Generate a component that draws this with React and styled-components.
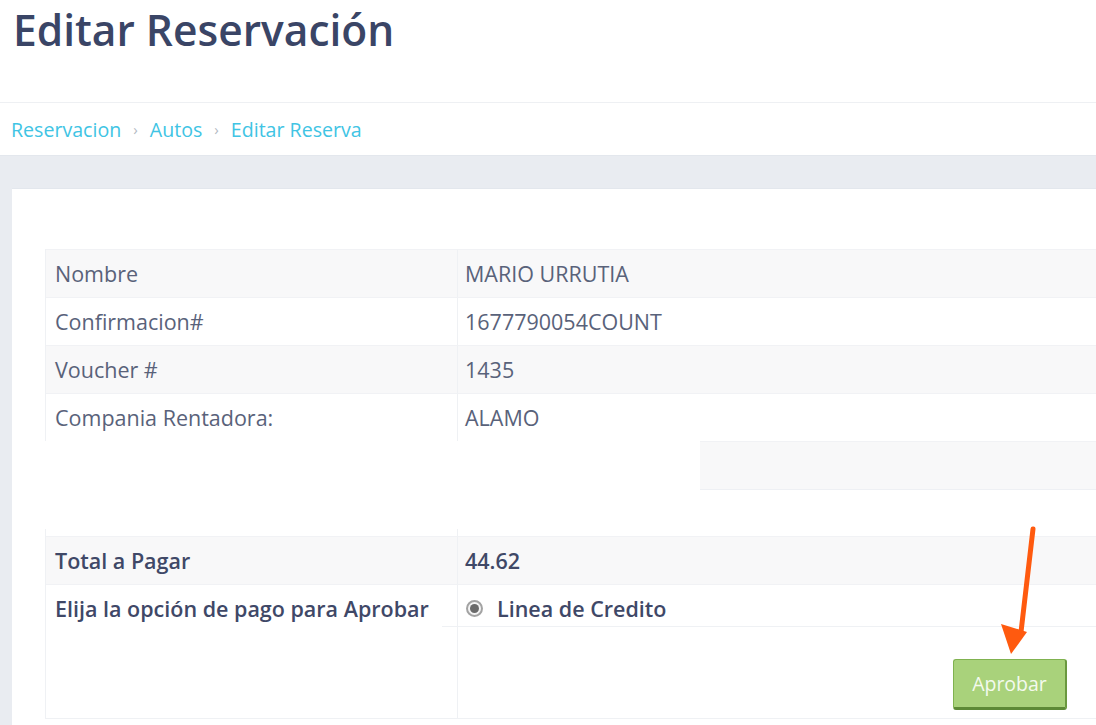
import React from "react";
import styled, { createGlobalStyle } from "styled-components";

const GlobalStyle = createGlobalStyle`
  html, body {
    margin: 0;
    padding: 0;
    background: #fff;
    font-family: "Open Sans", "Liberation Sans", sans-serif;
    overflow: hidden;
  }
`;

const Page = styled.div`
  width: 1096px;
  height: 725px;
  position: relative;
  overflow: hidden;
`;

const Header = styled.header`
  height: 103px;
  padding-left: 13px;
  border-bottom: 1px solid #eef0f3;
  box-sizing: border-box;
`;

const Title = styled.h1`
  margin: 0;
  padding-top: 1px;
  font-size: 42.5px;
  font-weight: 600;
  line-height: 58px;
  color: #3a4566;
`;

const Crumbs = styled.nav`
  height: 53px;
  display: flex;
  align-items: center;
  padding-left: 11px;
  gap: 11px;
  font-size: 19.6px;
  color: #40c4e4;
  border-bottom: 1px solid #e3e7ed;
  box-sizing: border-box;
`;

const Sep = styled.span`
  color: #b4bac4;
  font-size: 15px;
  padding: 0 1px;
`;

const Main = styled.main`
  background: #e9ecf1;
  padding: 32px 0 0 12px;
`;

const Panel = styled.section`
  background: #fff;
  padding: 60px 0 8px 33px;
  min-height: 560px;
  border-top: 1px solid #e3e7ed;
`;

const Table = styled.div`
  display: grid;
  grid-template-columns: 411px 1fr;
  border-left: 1px solid #eff1f4;
  ${(p) => (p.$bottom ? "border-bottom: 1px solid #eff1f4;" : "")}
`;

const Cell = styled.div`
  height: 48px;
  box-sizing: border-box;
  display: flex;
  align-items: center;
  padding-left: ${(p) => (p.$first ? 9 : 7)}px;
  font-size: 21.5px;
  font-weight: ${(p) => (p.$bold ? 600 : 400)};
  color: ${(p) => (p.$bold ? "#3f4867" : "#59627a")};
  background: ${(p) => (p.$striped ? "#f8f8f9" : "#fff")};
  border-top: 1px solid #f1f2f5;
  ${(p) => (p.$first ? "" : "border-left: 1px solid #eff1f4;")}
`;

const GapCell = styled.div`
  height: 7px;
  ${(p) => (p.$first ? "" : "border-left: 1px solid #eff1f4;")}
`;

const Filler = styled.div`
  height: 47px;
  margin-left: 655px;
  margin-bottom: 39px;
  background: #f8f8f9;
  border-top: 1px solid #f1f2f5;
  border-bottom: 1px solid #eef0f4;
`;

const TopCell = styled.div`
  padding: 9px 0 0 9px;
  font-size: 21.5px;
  font-weight: 600;
  color: #3f4867;
  border-top: 1px solid #f1f2f5;
  height: 134px;
  box-sizing: border-box;
`;

const OptionCell = styled.div`
  border-left: 1px solid #eff1f4;
  border-top: 1px solid #f1f2f5;
  display: flex;
  flex-direction: column;
`;

const Option = styled.label`
  height: 42px;
  margin-left: -16px;
  padding: 5px 0 0 24px;
  display: flex;
  align-items: center;
  gap: 14px;
  font-size: 21.5px;
  font-weight: 600;
  color: #3f4867;
  border-bottom: 1px solid #eff1f4;
  box-sizing: border-box;
`;

const Radio = styled.span`
  width: 17px;
  height: 17px;
  border-radius: 50%;
  box-sizing: border-box;
  border: 2.5px solid #a3a3a3;
  background: #f4f4f4;
  display: flex;
  align-items: center;
  justify-content: center;
  &::after {
    content: "";
    width: 9px;
    height: 9px;
    border-radius: 50%;
    background: #6a6a6a;
  }
`;

const Actions = styled.div`
  display: flex;
  justify-content: flex-end;
  padding: 32px 29px 0 0;
`;

const Button = styled.button`
  width: 114px;
  height: 51px;
  font-family: inherit;
  font-size: 19.5px;
  color: #f4faee;
  background: #a9d27b;
  border: 1px solid #80b250;
  border-bottom: 3px solid #5d8a36;
  border-right: 2px solid #6a983f;
  border-radius: 3px;
  padding: 0;
`;

const Arrow = styled.svg`
  position: absolute;
  left: 996px;
  top: 524px;
`;

const rows = [
  ["Nombre", "MARIO URRUTIA"],
  ["Confirmacion#", "1677790054COUNT"],
  ["Voucher #", "1435"],
  ["Compania Rentadora:", "ALAMO"],
];

export default function App() {
  return (
    <Page>
      <GlobalStyle />
      <Header>
        <Title>Editar Reservación</Title>
      </Header>
      <Crumbs>
        <span>Reservacion</span>
        <Sep>›</Sep>
        <span>Autos</span>
        <Sep>›</Sep>
        <span>Editar Reserva</span>
      </Crumbs>
      <Main>
        <Panel>
          <Table>
            {rows.map(([k, v], i) => (
              <React.Fragment key={k}>
                <Cell $first $striped={i % 2 === 0}>{k}</Cell>
                <Cell $striped={i % 2 === 0}>{v}</Cell>
              </React.Fragment>
            ))}
          </Table>
          <Filler />
          <Table $bottom>
            <GapCell $first />
            <GapCell />
            <Cell $first $bold $striped>Total a Pagar</Cell>
            <Cell $bold $striped>44.62</Cell>
            <TopCell>Elija la opción de pago para Aprobar</TopCell>
            <OptionCell>
              <Option>
                <Radio />
                Linea de Credito
              </Option>
              <Actions>
                <Button>Aprobar</Button>
              </Actions>
            </OptionCell>
          </Table>
        </Panel>
      </Main>
      <Arrow width="60" height="135" viewBox="0 0 60 135">
        <line x1="37" y1="5" x2="25" y2="108" stroke="#ff5a0f" strokeWidth="5" strokeLinecap="round" />
        <polygon points="5,100 31,108 15,130" fill="#ff5a0f" />
      </Arrow>
    </Page>
  );
}
